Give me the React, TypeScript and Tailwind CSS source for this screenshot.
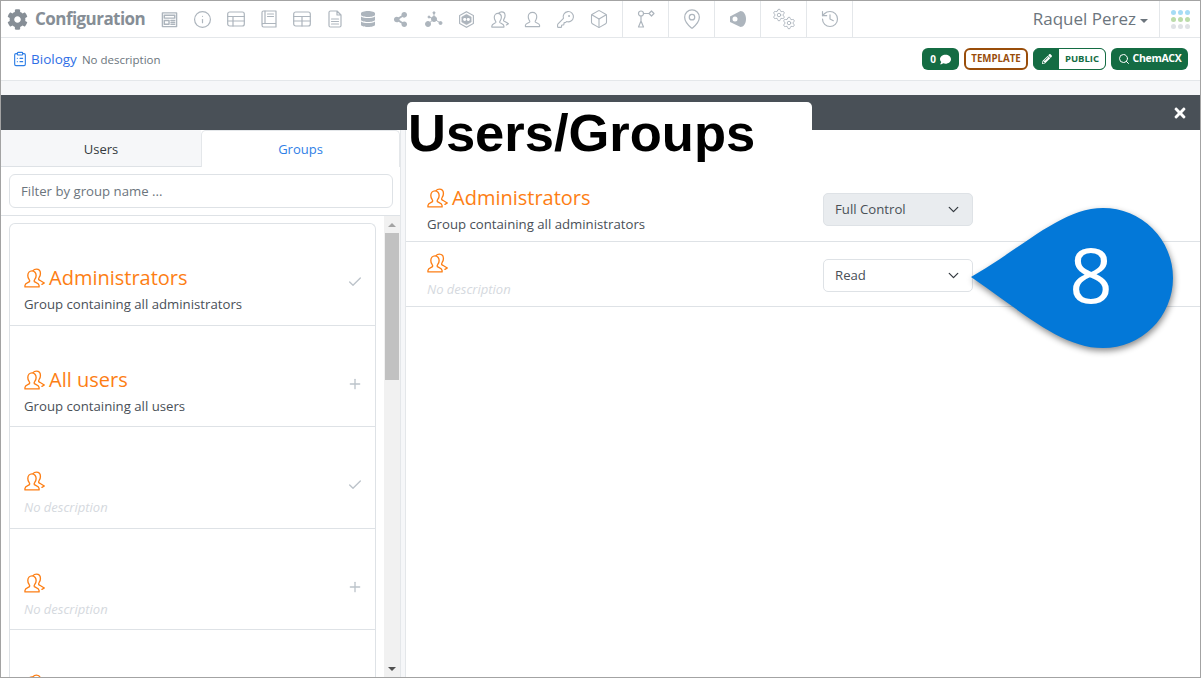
import React from "react";
import { Info, Search, ChevronDown, Check, Plus, ClipboardList, History, MapPin, Box, KeyRound, Settings } from "lucide-react";
import { FaCog, FaDatabase, FaShareAlt, FaPencilAlt, FaComment, FaTimes } from "react-icons/fa";

const GroupIcon = ({ className = "" }: { className?: string }) => (
  <svg viewBox="0 0 22 20" className={className} fill="none" stroke="currentColor" strokeWidth="1.4" strokeLinejoin="round" strokeLinecap="round">
    <path d="M1 19.3h14.800v-1.500c0-2-3.500-3-5-4-.6-.8 0-1.500.6-2.500.7-1 1.300-2.500 1.300-4 0-2.500-1.700-4.800-4.300-4.800S4 4.800 4 7.300c0 1.500.5 3 1.200 4 .6 1 1.200 1.700.6 2.500-1.500 1-4.800 2-4.800 4z" />
    <path d="M9.500 2.300C10.300 1.200 11.500.7 13 .7c2.500 0 4.200 2 4.200 4.500 0 1.500-.5 3-1.200 4-.6 1-1 1.700-.5 2.500 1 .8 2.800 1.500 5.800 3.500l-2.500 1.500" />
  </svg>
);

const stroke = { fill: "none", stroke: "currentColor", strokeWidth: 1.2, strokeLinejoin: "round" as const, strokeLinecap: "round" as const };

const Form = () => (
  <svg viewBox="0 0 18 18" className="w-[17px] h-[17px]" {...stroke} strokeWidth={1.5}>
    <rect x="1.500" y="2" width="15" height="14.500" />
    <path d="M3.500 4.500h11v3h-11zM3.500 10h5v4h-5zM10.500 10h4M10.500 12h4M10.500 14h4" />
  </svg>
);
const Grid1 = () => (
  <svg viewBox="0 0 18 16" className="w-[18px] h-[16px]" {...stroke}>
    <rect x="0.700" y="1" width="16.600" height="14" rx="2" />
    <path d="M.7 5.500h16.600M.7 10h16.600M6 5.500V15" />
  </svg>
);
const Grid2 = () => (
  <svg viewBox="0 0 18 16" className="w-[18px] h-[16px]" {...stroke}>
    <rect x="0.700" y="1" width="16.600" height="14" rx="2" />
    <path d="M.7 5.500h16.600M.7 10h16.600M9 5.500V15" />
  </svg>
);
const Book = () => (
  <svg viewBox="0 0 16 18" className="w-[16px] h-[18px]" {...stroke}>
    <path d="M1 15V2.500C1 1.500 1.700 1 2.500 1H15v12.500H2.500C1.700 13.500 1 14 1 15s.7 2 1.500 2H15v-3.500" />
    <path d="M4 1v12.500M6.500 4h6M6.500 6.500h6" />
  </svg>
);
const Doc = () => (
  <svg viewBox="0 0 14 18" className="w-[14px] h-[18px]" {...stroke}>
    <path d="M1 2.500C1 1.500 1.500 1 2.500 1H9l4 4v10.500c0 1-.5 1.500-1.500 1.500h-9C1.500 17 1 16.500 1 15.500zM9 1v4h4M3.500 9h7M3.500 11.500h7M3.500 14h7" />
  </svg>
);
const Molecule = () => (
  <svg viewBox="0 0 18 16" className="w-[18px] h-[16px]" fill="currentColor" stroke="currentColor" strokeWidth="1">
    <circle cx="9" cy="8" r="2.500" />
    <circle cx="3" cy="13" r="2.500" />
    <circle cx="15.500" cy="12" r="1.500" />
    <circle cx="9" cy="1.800" r="1" />
    <circle cx="4" cy="6" r="1" />
    <path d="M9 2v6M3 13l6-5 6.500 4M4 6l5 2" fill="none" />
  </svg>
);
const Hex = () => (
  <svg viewBox="0 0 18 18" className="w-[17px] h-[17px]" fill="none" stroke="currentColor">
    <path d="M9 .8l7.300 4v8.400L9 17.200l-7.300-4V4.800z" strokeWidth="1.200" />
    <path d="M9 3.500l5 2.800v5.400l-5 2.800-5-2.800V6.300z" fill="currentColor" strokeWidth="0.500" />
    <rect x="5.500" y="7.500" width="3.200" height="3" rx="1.400" fill="#fff" stroke="none" />
    <rect x="9.300" y="7.500" width="3.200" height="3" rx="1.400" fill="#fff" stroke="none" />
  </svg>
);
const Person = () => (
  <svg viewBox="0 0 18 18" className="w-[17px] h-[17px]" {...stroke}>
    <path d="M1.500 16.500h15V15c0-1.500-3.500-2.500-4.500-3.200-.5-.6-.2-1.200.5-2.200.6-1 1-2.300 1-3.600 0-2.600-1.700-4.500-4.500-4.500S4.500 3.400 4.500 6c0 1.300.4 2.600 1 3.600.7 1 1 1.600.5 2.200-1 .7-4.500 1.700-4.500 3.200z" />
  </svg>
);
const Flow = () => (
  <svg viewBox="0 0 18 18" className="w-[18px] h-[18px]" {...stroke}>
    <circle cx="4" cy="3.500" r="2.500" />
    <path d="M6.500 3.500h5M14.500 1l2.500 2.500-2.500 2.500L12 3.500zM4 6v6M4 11L1.500 17h5z" />
  </svg>
);
const Tag = () => (
  <svg viewBox="0 0 18 18" className="w-[18px] h-[18px]" fill="currentColor">
    <path d="M1 6.500L11.500 1c3 0 5.500 3.500 5.500 8s-2.500 8-5.500 8L1 12z" />
    <circle cx="6" cy="9" r="2.500" fill="#fff" />
  </svg>
);
const Gears = () => (
  <div className="flex h-[22px] w-[24px] justify-between">
    <Settings size={14} strokeWidth={1.600} className="self-start" />
    <Settings size={14} strokeWidth={1.600} className="self-end -ml-[4px]" />
  </div>
);
const Users2 = () => <GroupIcon className="w-[18px] h-[17px]" />;

const I = ({ children }: { children: React.ReactNode }) => (
  <div className="w-[33px] h-[36px] flex items-center justify-center text-[#adb5bd]">{children}</div>
);
const S = ({ children }: { children: React.ReactNode }) => (
  <div className="w-[46px] h-[36px] border-l border-[#e4e7ea] flex items-center justify-center text-[#adb5bd]">{children}</div>
);

const Item = ({ title, desc, added, cut }: { title?: string; desc?: string; added: boolean; cut?: boolean }) => (
  <div className="relative h-[101.500px] shrink-0 border-b border-[#dee2e6] px-[14px] pt-[42px] box-border">
    <div className="flex items-center h-[24px] text-[#fd7e14]">
      <GroupIcon className="w-[21px] h-[20px] mr-[4px] shrink-0" />
      {title && <span className="text-[20px] leading-[24px]">{title}</span>}
    </div>
    {cut ? null : desc ? (
      <div className="text-[13.200px] leading-[18px] mt-[5px] text-[#495057]">{desc}</div>
    ) : (
      <div className="text-[13px] leading-[18px] mt-[5px] italic text-[#d5d9de]">No description</div>
    )}
    <div className="absolute right-[12px] top-[50px] text-[#bcc3ca]">
      {added ? <Check size={16} strokeWidth={2} /> : <Plus size={16} strokeWidth={2} />}
    </div>
  </div>
);

const Picker = ({ value, active }: { value: string; active?: boolean }) => (
  <div className={`w-[150px] h-[33px] box-border border border-[#dee2e6] rounded-[5px] flex items-center justify-between pl-[11px] pr-[10px] text-[13.200px] text-[#495057] ${active ? "bg-[#e9ecef]" : "bg-white"}`}>
    <span className="pt-[1px]">{value}</span>
    <ChevronDown size={17} strokeWidth={1.800} className="text-[#343a40]" />
  </div>
);

export default function App() {
  return (
    <div className="relative w-[1201px] h-[678px] box-border border border-[#a3a3a3] overflow-hidden bg-white flex flex-col" style={{ fontFamily: '"Open Sans", "Noto Sans", sans-serif' }}>
      {/* top bar */}
      <div className="h-[36px] shrink-0 border-b border-[#e4e7ea] flex items-start box-content">
        <div className="flex items-center h-[36px] pl-[6px] w-[144px] shrink-0 text-[#868e96]">
          <FaCog size={21} className="shrink-0" />
          <span className="ml-[7px] text-[17px] font-bold tracking-[-0.55px]">Configuration</span>
        </div>
        <div className="flex ml-[8px]">
          <I><Form /></I>
          <I><Info size={19} strokeWidth={1.500} /></I>
          <I><Grid1 /></I>
          <I><Book /></I>
          <I><Grid2 /></I>
          <I><Doc /></I>
          <I><FaDatabase size={16} /></I>
          <I><FaShareAlt size={15} /></I>
          <I><Molecule /></I>
          <I><Hex /></I>
          <I><Users2 /></I>
          <I><Person /></I>
          <I><KeyRound size={19} strokeWidth={1.400} /></I>
          <I><Box size={20} strokeWidth={1.300} /></I>
        </div>
        <div className="flex ml-[7px]">
          <S><Flow /></S>
          <S><MapPin size={22} strokeWidth={1.300} /></S>
          <S><Tag /></S>
          <S><Gears /></S>
          <S><History size={20} strokeWidth={1.400} /></S>
        </div>
        <div className="flex-1 h-[36px] border-l border-[#e4e7ea] flex items-center justify-end pr-[11px] text-[#6c757d]">
          <span className="text-[17px] font-medium">Raquel Perez</span>
          <span className="ml-[4px] mt-[3px] w-0 h-0 border-x-[4px] border-x-transparent border-t-[4px] border-t-[#6c757d]" />
        </div>
        <div className="w-[41px] h-[36px] border-l border-[#e4e7ea] flex items-center justify-center">
          <div className="grid grid-cols-3 gap-[2px]">
            {["#a6dcf5", "#a6dcf5", "#a6dcf5", "#bcdcaa", "#bcdcaa", "#bcdcaa", "#dfe2e5", "#dfe2e5", "#dfe2e5"].map((c, i) => (
              <span key={i} className="w-[5px] h-[5px] rounded-full" style={{ background: c }} />
            ))}
          </div>
        </div>
      </div>

      {/* breadcrumb row */}
      <div className="h-[42px] shrink-0 border-b border-[#e4e7ea] flex items-center pl-[11px] pr-[12px] box-content">
        <ClipboardList size={16} className="text-[#2f7fe6]" strokeWidth={1.700} />
        <span className="ml-[3px] pt-[1px] text-[13.500px] text-[#2f6fe6]">Biology</span>
        <span className="ml-[5px] pt-[1px] text-[11.500px] text-[#6c757d]">No description</span>
        <div className="ml-auto flex items-center gap-[5px]">
          <div className="h-[22px] w-[37px] rounded-[6px] bg-[#146c43] text-white flex items-center justify-center gap-[4px] text-[10px] font-bold">
            0 <FaComment size={11} />
          </div>
          <div className="h-[22px] w-[64px] box-border rounded-[6px] border-2 border-[#994d0a] text-[#994d0a] flex items-center justify-center text-[9.700px] font-bold">TEMPLATE</div>
          <div className="h-[22px] w-[73px] box-border rounded-[6px] border-[1.500px] border-[#146c43] bg-[#146c43] flex overflow-hidden">
            <div className="w-[25px] flex items-center justify-center text-white"><FaPencilAlt size={10} /></div>
            <div className="flex-1 bg-white rounded-r-[4px] text-[#146c43] text-[9.500px] font-bold flex items-center justify-center">PUBLIC</div>
          </div>
          <div className="h-[22px] w-[77px] rounded-[6px] bg-[#146c43] text-white flex items-center justify-center gap-[3px] text-[10.500px] font-bold tracking-[-0.3px]">
            <Search size={12} /> ChemACX
          </div>
        </div>
      </div>

      <div className="h-[14px] shrink-0 bg-[#f6f7f9]" />

      {/* dark modal header */}
      <div className="h-[35px] shrink-0 bg-[#495057] flex items-center justify-end pr-[12px] text-white">
        <FaTimes size={16} />
      </div>

      {/* body */}
      <div className="flex-1 min-h-0 flex bg-[#f6f7f9]">
        {/* left */}
        <div className="w-[400px] shrink-0 bg-white border-r border-[#e4e7ea] flex flex-col">
          <div className="flex h-[37px] shrink-0 text-[13px]">
            <div className="w-[200px] bg-[#f6f7f9] border-b border-[#dee2e6] pt-[3px] flex items-center justify-center text-[#343a40]">Users</div>
            <div className="flex-1 bg-white border-x border-t border-[#e4e7ea] rounded-t-[5px] pt-[1px] flex items-center justify-center text-[#2f7fe6]">Groups</div>
          </div>
          <div className="h-[49px] shrink-0 pl-[8px] pr-[7px] pt-[7px] border-b border-[#dee2e6] box-border">
            <div className="h-[34px] box-border border border-[#dee2e6] rounded-[6px] flex items-center px-[11px] pt-[1px] text-[13.200px] text-[#6c757d]">Filter by group name ...</div>
          </div>
          <div className="flex-1 min-h-0 flex overflow-hidden">
            <div className="w-[383px] shrink-0 pl-[8px] pr-[8px] pt-[7px]">
              <div className="border-x border-t border-[#dee2e6] rounded-t-[6px] box-border">
                <Item title="Administrators" desc="Group containing all administrators" added />
                <Item title="All users" desc="Group containing all users" added={false} />
                <Item added />
                <Item added={false} />
                <Item added cut />
              </div>
            </div>
            <div className="w-[16px] bg-[#f1f1f1] flex flex-col items-center">
              <div className="h-[17px] flex items-center justify-center">
                <span className="w-0 h-0 border-x-[4px] border-x-transparent border-b-[4px] border-b-[#a3a3a3]" />
              </div>
              <div className="w-[14px] h-[147px] bg-[#c1c1c1]" />
              <div className="mt-auto h-[17px] flex items-center justify-center">
                <span className="w-0 h-0 border-x-[4px] border-x-transparent border-t-[4px] border-t-[#505050]" />
              </div>
            </div>
          </div>
        </div>

        {/* right */}
        <div className="ml-[4px] flex-1 bg-white border-l border-[#e4e7ea] flex flex-col relative">
          <div className="relative z-10 -mt-[28px] ml-[1px] w-[405px] h-[75px] bg-white rounded-t-[5px] pl-[1px] shrink-0">
            <h1 className="text-[52.500px] leading-[60px] font-bold text-black pt-[1px]" style={{ fontFamily: '"Liberation Sans", sans-serif' }}>Users/Groups</h1>
          </div>
          <div className="h-[65px] shrink-0 border-b border-[#dee2e6] flex items-center justify-between box-border pl-[21px]">
            <div>
              <div className="flex items-center h-[24px] text-[#fd7e14]">
                <GroupIcon className="w-[21px] h-[20px] mr-[4px]" />
                <span className="text-[20px] leading-[24px]">Administrators</span>
              </div>
              <div className="text-[13.200px] leading-[18px] mt-[5px] text-[#495057]">Group containing all administrators</div>
            </div>
            <div className="mr-[227px] mt-[1px]"><Picker value="Full Control" active /></div>
          </div>
          <div className="h-[65px] shrink-0 border-b border-[#dee2e6] flex items-center justify-between box-border pl-[21px]">
            <div>
              <div className="flex items-center h-[24px] text-[#fd7e14]">
                <GroupIcon className="w-[21px] h-[20px]" />
              </div>
              <div className="text-[13px] leading-[18px] mt-[5px] italic text-[#d5d9de]">No description</div>
            </div>
            <div className="mr-[227px] mt-[2px]"><Picker value="Read" /></div>
          </div>
        </div>
      </div>

      {/* callout */}
      <svg className="absolute left-[960px] top-[195px] w-[230px] h-[170px] pointer-events-none" viewBox="960 195 230 170" style={{ filter: "drop-shadow(1px 3px 3px rgba(0,0,0,0.45))" }}>
        <path d="M970 276 C1020 248 1060 207 1102 207 A70 70 0 0 1 1102 347 C1060 347 1020 310 970 276 Z" fill="#0378d8" />
      </svg>
      <div className="absolute left-[1050px] top-[220px] w-[80px] h-[106px] flex items-center justify-center text-white text-[76px] leading-none">8</div>
    </div>
  );
}
